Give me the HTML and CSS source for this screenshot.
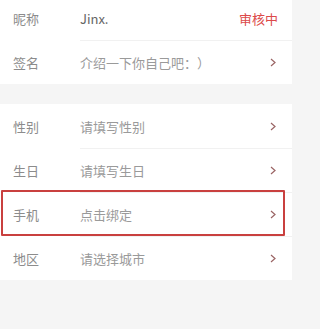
FILE: index.html
```html
<!DOCTYPE html>
<html lang="zh">
<head>
<meta charset="utf-8">
<link rel="stylesheet" href="styles.css">
</head>
<body>
<div class="page">
  <div class="group first">
    <div class="row">
      <span class="label">昵称</span>
      <span class="value dark">Jinx.</span>
      <span class="status">审核中</span>
    </div>
    <div class="row">
      <span class="label">签名</span>
      <span class="value">介绍一下你自己吧：）</span>
      <svg class="chev" width="6" height="9" viewBox="0 0 6 9"><polyline points="1,1 5,4.5 1,8" fill="none" stroke="#9a6464" stroke-width="1.2"/></svg>
    </div>
  </div>
  <div class="group">
    <div class="row">
      <span class="label">性别</span>
      <span class="value">请填写性别</span>
      <svg class="chev" width="6" height="9" viewBox="0 0 6 9"><polyline points="1,1 5,4.5 1,8" fill="none" stroke="#9a6464" stroke-width="1.2"/></svg>
    </div>
    <div class="row">
      <span class="label">生日</span>
      <span class="value">请填写生日</span>
      <svg class="chev" width="6" height="9" viewBox="0 0 6 9"><polyline points="1,1 5,4.5 1,8" fill="none" stroke="#9a6464" stroke-width="1.2"/></svg>
    </div>
    <div class="row marked">
      <span class="label">手机</span>
      <span class="value">点击绑定</span>
      <svg class="chev" width="6" height="9" viewBox="0 0 6 9"><polyline points="1,1 5,4.5 1,8" fill="none" stroke="#9a6464" stroke-width="1.2"/></svg>
    </div>
    <div class="row">
      <span class="label">地区</span>
      <span class="value">请选择城市</span>
      <svg class="chev" width="6" height="9" viewBox="0 0 6 9"><polyline points="1,1 5,4.5 1,8" fill="none" stroke="#9a6464" stroke-width="1.2"/></svg>
    </div>
  </div>
</div>
</body>
</html>
```
FILE: styles.css
```css
html, body {
  margin: 0;
  padding: 0;
  background: #f5f5f5;
}
body {
  font-family: "Noto Sans CJK SC", "Noto Sans", sans-serif;
  font-size: 13px;
  width: 292px;
  height: 329px;
  overflow: hidden;
  text-spacing-trim: space-all;
}
.page {
  display: flex;
  flex-direction: column;
  gap: 20px;
}
.group {
  background: #fff;
  display: flex;
  flex-direction: column;
}
.group.first {
  margin-top: -4px;
}
.row {
  height: 44px;
  display: flex;
  align-items: center;
  padding: 0 16px 0 13px;
  position: relative;
}
.row + .row::before {
  content: "";
  position: absolute;
  left: 80px;
  right: 0;
  top: 0;
  height: 1px;
  background: #f1f1f1;
}
.label {
  width: 67px;
  color: #8c8c8c;
}
.value {
  flex: 1;
  color: #9a9a9a;
}
.value.dark {
  color: #666;
}
.status {
  color: #dc4a4a;
  margin-right: -2px;
}
.chev {
  display: block;
}
.marked::after {
  content: "";
  position: absolute;
  left: 1px;
  right: 7px;
  top: -2px;
  bottom: 0;
  border: 2px solid #c9403f;
  border-radius: 1px;
  box-sizing: border-box;
}
```
